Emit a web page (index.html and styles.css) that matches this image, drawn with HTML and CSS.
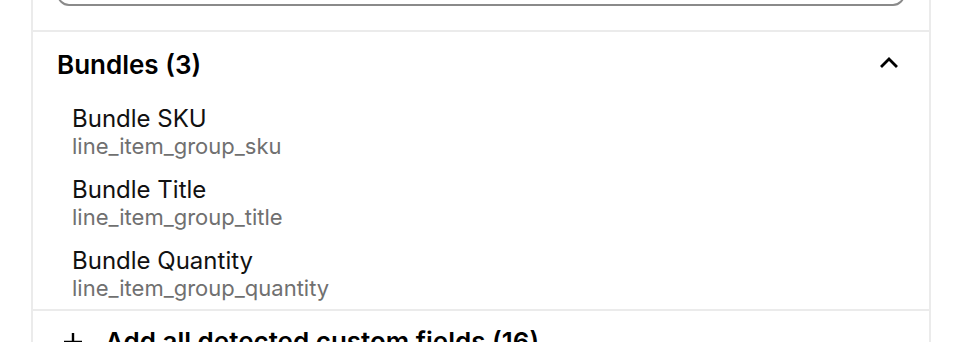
FILE: index.html
```html
<!DOCTYPE html>
<html lang="en">
  <head>
    <meta charset="UTF-8" />
    <meta name="viewport" content="width=device-width, initial-scale=1.0" />
    <title>Field mapping</title>
    <link rel="stylesheet" href="styles.css">
  </head>
  <body>
    <div class="panel">
      <div class="search-section">
        <input class="search" type="text" placeholder="">
      </div>

      <section class="group">
        <div class="group-header">
          <div class="group-title">Bundles (3)</div>
          <svg class="chevron" width="24" height="24" viewBox="0 0 24 24" fill="none">
            <path d="M5 16l7-7 7 7" stroke="#000" stroke-width="2.8" stroke-linecap="square" stroke-linejoin="miter"/>
          </svg>
        </div>
        <ul class="fields">
          <li class="field">
            <div class="field-name">Bundle SKU</div>
            <div class="field-key">line_item_group_sku</div>
          </li>
          <li class="field">
            <div class="field-name">Bundle Title</div>
            <div class="field-key">line_item_group_title</div>
          </li>
          <li class="field">
            <div class="field-name">Bundle Quantity</div>
            <div class="field-key">line_item_group_quantity</div>
          </li>
        </ul>
      </section>

      <button class="add-all">
        <svg class="plus" width="24" height="24" viewBox="0 0 24 24" fill="none">
          <path d="M12 3v18M3 12h18" stroke="#000" stroke-width="2.4"/>
        </svg>
        <span>Add all detected custom fields (16)</span>
      </button>
    </div>
  </body>
</html>
```

FILE: styles.css
```css
body {
  margin: 0;
  padding: 0;
  background: #fff;
  font-family: Inter, "Noto Sans", sans-serif;
  color: #000;
}
.panel {
  width: 900px;
  box-sizing: border-box;
  margin: -64px auto 0;
  border: 2px solid #ebebeb;
  background: #fff;
}
.search-section {
  padding: 24px 24px 24px;
  border-bottom: 2px solid #ebebeb;
}
.search {
  display: block;
  width: 100%;
  height: 44px;
  box-sizing: border-box;
  border: 2px solid #8a8a8a;
  border-radius: 12px;
  background: #fff;
}
.group-header {
  display: flex;
  justify-content: space-between;
  align-items: flex-start;
  padding: 15px 24px 13px;
}
.group-title {
  font-size: 26px;
  line-height: 36px;
  font-weight: 600;
}
.chevron {
  margin-top: 3px;
  margin-right: 4px;
}
.fields {
  list-style: none;
  margin: 0;
  padding: 0 24px 0 39px;
}
.field {
  padding: 8px 0;
}
.field-name {
  font-size: 24px;
  line-height: 29px;
  color: #111;
}
.field-key {
  font-size: 22px;
  line-height: 26px;
  color: #707070;
}
.add-all {
  display: flex;
  align-items: center;
  gap: 20px;
  width: 100%;
  padding: 13px 24px;
  border: none;
  border-top: 2px solid #ebebeb;
  background: #fff;
  font-family: inherit;
  font-size: 26px;
  line-height: 36px;
  font-weight: 600;
  color: #000;
  text-align: left;
  cursor: pointer;
}
.plus {
  margin-left: 4px;
}
```
